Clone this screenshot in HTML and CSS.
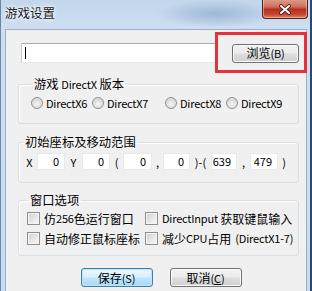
FILE: index.html
```html
<!DOCTYPE html>
<html lang="zh-CN">
<head>
    <meta charset="UTF-8">
    <title>游戏设置</title>
    <link rel="stylesheet" href="styles.css">
</head>
<body>
    <div class="window">
        <div class="titlebar">
            <span class="title">游戏设置</span>
            <div class="close">
                <svg width="14" height="11" viewBox="0 0 14 11">
                    <path d="M3 2 L11 9 M11 2 L3 9" stroke="#3a1410" stroke-width="3.6" stroke-linecap="round"/>
                    <path d="M3 2 L11 9 M11 2 L3 9" stroke="#fff" stroke-width="2" stroke-linecap="round"/>
                </svg>
            </div>
        </div>

        <div class="client">
            <div class="path-row">
                <div class="edit"><span class="caret"></span></div>
                <button class="btn browse">浏览<span class="en">(B)</span></button>
            </div>

            <fieldset class="group g-dx">
                <legend>游戏 <span class="en">DirectX</span> 版本</legend>
                <div class="radios">
                    <label class="opt"><span class="radio"></span><span class="en">DirectX6</span></label>
                    <label class="opt"><span class="radio"></span><span class="en">DirectX7</span></label>
                    <label class="opt"><span class="radio"></span><span class="en">DirectX8</span></label>
                    <label class="opt"><span class="radio"></span><span class="en">DirectX9</span></label>
                </div>
            </fieldset>

            <fieldset class="group g-pos">
                <legend>初始座标及移动范围</legend>
                <div class="coords">
                    <span class="sep s-x">X</span>
                    <span class="num w28">0</span>
                    <span class="sep s-y">Y</span>
                    <span class="num w28">0</span>
                    <span class="sep s-op">(</span>
                    <span class="num w29">0</span>
                    <span class="sep s-comma">,</span>
                    <span class="num w27">0</span>
                    <span class="sep s-mid">)-(</span>
                    <span class="num w26">639</span>
                    <span class="sep s-comma2">,</span>
                    <span class="num w28">479</span>
                    <span class="sep s-cl">)</span>
                </div>
            </fieldset>

            <fieldset class="group g-win">
                <legend>窗口选项</legend>
                <div class="checks">
                    <label class="opt"><span class="check"></span>仿<span class="en">256</span>色运行窗口</label>
                    <label class="opt"><span class="check"></span><span class="en">DirectInput&nbsp;</span>获取键鼠输入</label>
                    <label class="opt"><span class="check"></span>自动修正鼠标座标</label>
                    <label class="opt"><span class="check"></span>减少<span class="en">CPU</span>占用<span class="en gap">(DirectX1-7)</span></label>
                </div>
            </fieldset>

            <div class="actions">
                <button class="btn default">保存<span class="en">(S)</span></button>
                <button class="btn">取消<span class="en">(<u>C</u>)</span></button>
            </div>
        </div>

        <!-- 标注框 -->
        <div class="mark"></div>
    </div>
</body>
</html>
```

FILE: styles.css
```css
body { margin: 0; background: #24497a; font-family: "Noto Sans CJK SC", sans-serif; font-size: 12px; color: #000; }
.en { font-size: 11px; letter-spacing: -0.2px; }
.en.gap { margin-left: 4px; }
.window { position: relative; width: 302px; height: 291px; padding: 0 3px 0 4px; border-left: 1px solid #6a87a8; overflow: hidden;
    background: radial-gradient(ellipse 60px 14px at 215px 14px, rgba(120,155,195,0.55), rgba(120,155,195,0)), linear-gradient(#c2d6ec, #cfdff0 30px, #c9dbee); }
.titlebar { height: 29px; display: flex; justify-content: space-between; align-items: flex-start; }
.title { margin-top: 5px; font-size: 12.5px; line-height: 16px; color: #1a1a1a; text-shadow: 0 0 6px #fff, 0 0 3px #fff; }
.close { width: 44px; height: 19px; margin-top: -1px; margin-right: -1px; border: 1px solid #5b1e16; border-top: none; border-radius: 0 0 4px 4px; display: flex; align-items: center; justify-content: center;
    background: linear-gradient(#e0a08f, #d0705c 40%, #b5301f 55%, #c4442e 80%, #d8866f); box-shadow: inset 0 0 0 1px rgba(255,210,200,0.5); }
.close svg { display: block; margin-top: 1px; }

.client { height: 262px; background: #f0f0f0; border: 1px solid #97aec6; border-bottom: none; padding: 13px 7px 0 12px; }
.path-row { display: flex; justify-content: space-between; align-items: center; margin-left: 3px; height: 20px; }
.edit { width: 193px; height: 18px; background: #fff; border: 1px solid #e3e9ef; border-top-color: #abadb3; border-left-color: #c5c9d0; position: relative; }
.caret { position: absolute; left: 3px; top: 3px; width: 1px; height: 12px; background: #000; }

.btn { font-family: "Noto Sans CJK SC", sans-serif; font-size: 12px; line-height: 15px; color: #000; padding: 0; border: 1px solid #707070; border-radius: 3px;
    background: linear-gradient(#f2f2f2, #ebebeb 48%, #dddddd 52%, #cfcfcf); box-shadow: inset 0 0 0 1px #fcfcfc; }
.browse { width: 67px; height: 19px; }
.btn u { text-decoration-thickness: 1px; text-underline-offset: 1px; }
.default { border-color: #3c7fb1; background: linear-gradient(#eaf6fd, #d9f0fc 48%, #bee6fd 52%, #a7d9f5); box-shadow: inset 0 0 0 1px #c0e4f7; }

.group { margin: 0; padding: 0; border: 1px solid #d5dfe5; border-radius: 3px; box-shadow: inset 1px 1px 0 #fff; }
.group legend { margin-left: 1px; padding: 0 2px; line-height: 14px; font-size: 12.3px; }
.g-dx { margin-top: 14px; padding: 4px 0 12px 12px; }
.g-pos { margin-top: 11px; padding: 4px 0 12px 3px; }
.g-win { margin-top: 10px; padding: 1px 0 7px 8px; }

.opt { display: flex; align-items: center; white-space: nowrap; }
.radios { display: grid; grid-template-columns: 61px 73px 61px auto; height: 16px; align-items: center; }
.radio { width: 10px; height: 10px; border: 1px solid #8f9091; border-radius: 50%; margin-right: 3px; background: radial-gradient(circle at 50% 60%, #f6f6f6, #e0e0e0 45%, #c6c6c6 75%); box-shadow: inset 0 0 0 1px #e8e8e8; }

.coords { display: flex; align-items: center; height: 17px; font-size: 11px; }
.num { line-height: 15px; background: #fff; border: 1px solid #e6e9ec; text-align: right; padding-right: 5px; box-sizing: border-box; height: 17px; }
.w26 { width: 26px; } .w27 { width: 27px; } .w28 { width: 28px; } .w29 { width: 29px; }
.sep { text-align: center; }
.s-x { width: 15px; }
.s-y { width: 17px; }
.s-op { width: 13px; }
.s-comma { width: 11px; }
.s-mid { width: 21px; }
.s-comma2 { width: 13px; }
.s-cl { width: 12px; }

.checks { display: grid; grid-template-columns: 118px auto; grid-auto-rows: 20px; align-items: center; }
.check { width: 11px; height: 11px; border: 1px solid #8e8f8f; margin-right: 4px; background: linear-gradient(135deg, #cfcfcf, #eeeeee 70%, #f6f6f6); box-shadow: inset 0 0 0 1px #f4f4f4; }

.actions { display: flex; justify-content: center; gap: 17px; margin-top: 12px; padding-left: 5px; }
.actions .btn { width: 72px; height: 19px; }

.mark { position: absolute; left: 214px; top: 32px; width: 86px; height: 35px; border: 3px solid #e5323a; }
```
